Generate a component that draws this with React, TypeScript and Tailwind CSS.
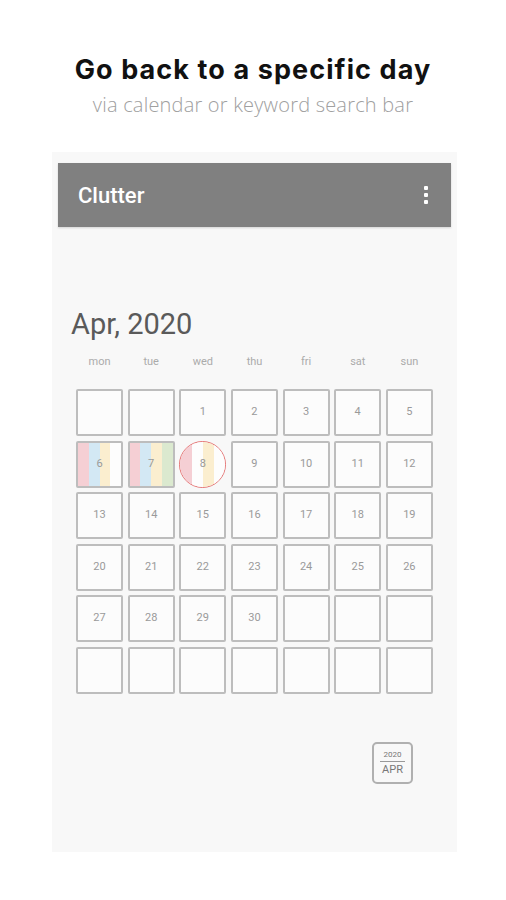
import React from 'react'

type Cell = {
  day?: number
  stripes?: string[]
  today?: boolean
}

const PINK = 'bg-[#f5cfd4]'
const BLUE = 'bg-[#d3e8f4]'
const YELLOW = 'bg-[#fbeecf]'
const GREEN = 'bg-[#dbe9cf]'
const WHITE = 'bg-[#fdfdfd]'

const weekdays = ['mon', 'tue', 'wed', 'thu', 'fri', 'sat', 'sun']

// April 2020 starts on a Wednesday
const cells: Cell[] = Array.from({ length: 42 }, (_, i) => {
  const day = i - 1
  if (day < 1 || day > 30) return {}
  if (day === 6) return { day, stripes: [PINK, BLUE, YELLOW, WHITE] }
  if (day === 7) return { day, stripes: [PINK, BLUE, YELLOW, GREEN] }
  if (day === 8) return { day, stripes: [PINK, WHITE, YELLOW, WHITE], today: true }
  return { day }
})

function DayCell({ cell }: { cell: Cell }) {
  if (cell.today) {
    return (
      <div className="relative w-[47px] h-[47px] rounded-full border border-[#e57373] overflow-hidden flex">
        {cell.stripes?.map((s, i) => (
          <div key={i} className={`flex-1 ${s}`} />
        ))}
        <span className="absolute inset-0 flex items-center justify-center text-[11px] text-[#999]">
          {cell.day}
        </span>
      </div>
    )
  }
  return (
    <div className="relative w-[47px] h-[47px] rounded-[2px] border-2 border-[#bdbdbd] bg-[#fcfcfc] overflow-hidden flex">
      {cell.stripes?.map((s, i) => (
        <div key={i} className={`flex-1 ${s}`} />
      ))}
      {cell.day && (
        <span className="absolute inset-0 flex items-center justify-center text-[11px] text-[#9a9a9a]">
          {cell.day}
        </span>
      )}
    </div>
  )
}

export default function App() {
  return (
    <div className="w-[506px] h-[900px] bg-white overflow-hidden" style={{ fontFamily: 'Roboto, sans-serif' }}>
      {/* Heading */}
      <div className="pt-[54px] text-center">
        <h1 className="text-[27px] leading-[32px] font-bold text-[#111] tracking-[1.1px]" style={{ fontFamily: 'Inter, sans-serif' }}>
          Go back to a specific day
        </h1>
        <p className="mt-[6px] text-[20px] leading-[25px] font-light text-[#a0a0a0] tracking-[0.2px]" style={{ fontFamily: '"Open Sans", sans-serif' }}>
          via calendar or keyword search bar
        </p>
      </div>

      {/* Phone screen */}
      <div className="mt-[35px] ml-[52px] w-[405px] h-[700px] bg-[#f8f8f8] pt-[11px]">
        {/* App bar */}
        <div className="mx-[6px] h-[64px] bg-[#808080] flex items-center justify-between pl-[20px] pr-[23px] shadow-[0_1px_2px_rgba(0,0,0,0.15)]">
          <span className="text-[22px] font-medium text-white">Clutter</span>
          <div className="flex flex-col gap-[3px]">
            <span className="w-[4px] h-[4px] bg-white rounded-[1px]" />
            <span className="w-[4px] h-[4px] bg-white rounded-[1px]" />
            <span className="w-[4px] h-[4px] bg-white rounded-[1px]" />
          </div>
        </div>

        {/* Month */}
        <div className="mt-[80px] pl-[19px] text-[29px] leading-[34px] text-[#5a5a5a]">Apr, 2020</div>

        {/* Calendar */}
        <div className="ml-[24px] w-[357px]">
          <div className="mt-[14px] grid grid-cols-7 gap-x-[4.5px]">
            {weekdays.map((d) => (
              <div key={d} className="text-center text-[11px] leading-[14px] text-[#ababab]">
                {d}
              </div>
            ))}
          </div>
          <div className="mt-[20px] grid grid-cols-7 gap-[4.5px]">
            {cells.map((c, i) => (
              <DayCell key={i} cell={c} />
            ))}
          </div>
        </div>

        {/* Month picker button */}
        <div className="mt-[48px] flex justify-end pr-[44px]">
          <div className="w-[41px] h-[42px] rounded-[5px] border-2 border-[#b0b0b0] flex flex-col items-center justify-center">
            <span className="text-[8px] leading-[9px] text-[#777]">2020</span>
            <span className="w-[25px] h-px bg-[#999] my-[2px]" />
            <span className="text-[11px] leading-[12px] text-[#777]">APR</span>
          </div>
        </div>
      </div>
    </div>
  )
}
